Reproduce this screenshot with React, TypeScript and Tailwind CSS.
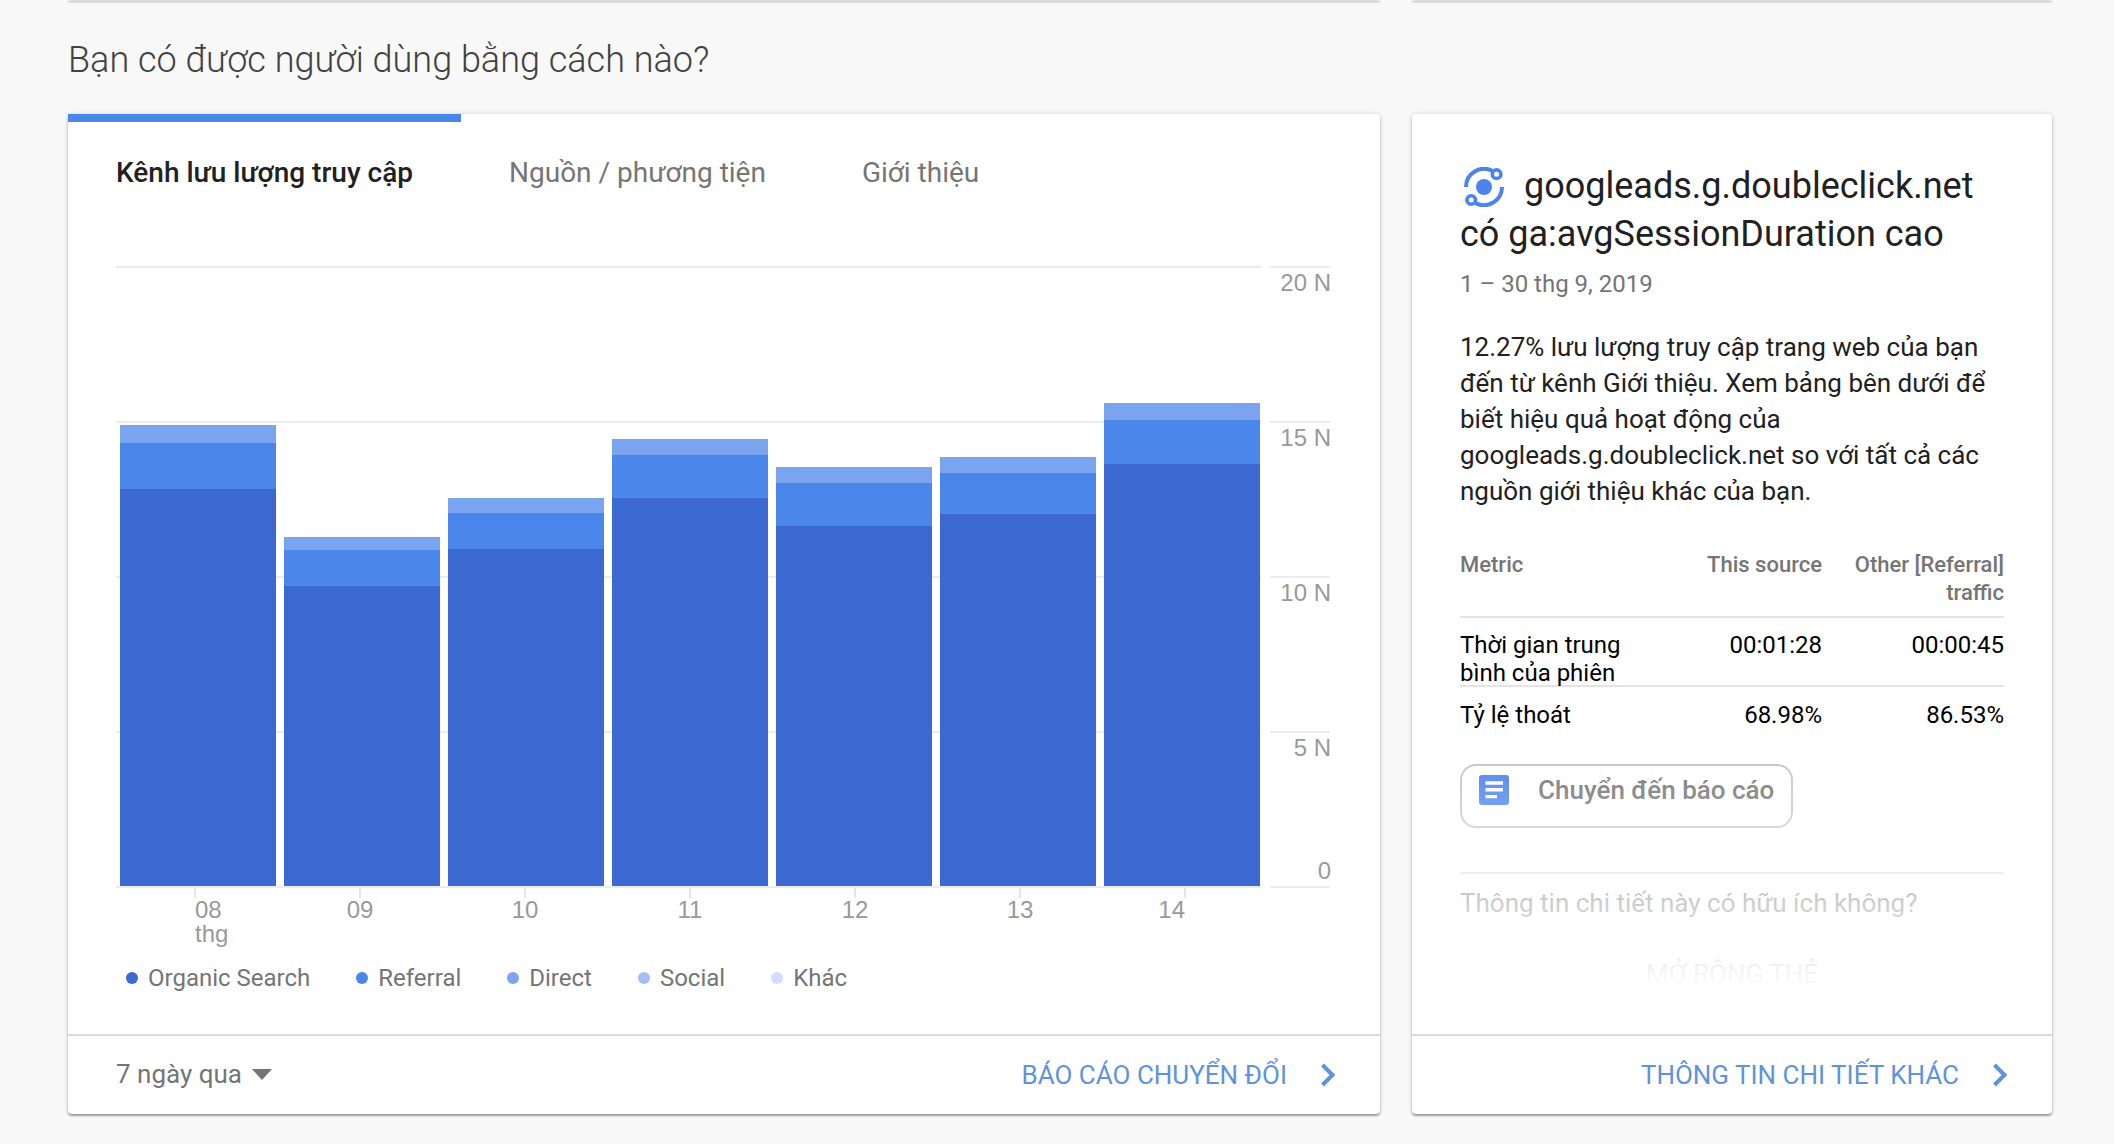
import { useState } from "react";

const tabs = ["Kênh lưu lượng truy cập", "Nguồn / phương tiện", "Giới thiệu"];

// tops of the stacked segments, measured from the top grid line
const bars = [
  { day: "08", direct: 159, referral: 177, organic: 223 },
  { day: "09", direct: 271, referral: 284, organic: 320 },
  { day: "10", direct: 232, referral: 247, organic: 283 },
  { day: "11", direct: 173, referral: 189, organic: 232 },
  { day: "12", direct: 201, referral: 217, organic: 260 },
  { day: "13", direct: 191, referral: 207, organic: 248 },
  { day: "14", direct: 137, referral: 154, organic: 198 },
];

const gridLines = [
  { y: 1, label: "20 N", labelY: 25 },
  { y: 156, label: "15 N", labelY: 180 },
  { y: 311, label: "10 N", labelY: 335 },
  { y: 466, label: "5 N", labelY: 490 },
  { y: 621, label: "0", labelY: 613 },
];

const legend = [
  { name: "Organic Search", dot: "bg-[#3b68d1]" },
  { name: "Referral", dot: "bg-[#4b86ea]" },
  { name: "Direct", dot: "bg-[#7ba4f2]" },
  { name: "Social", dot: "bg-[#a3bff5]" },
  { name: "Khác", dot: "bg-[#d0dcfa]" },
];

const metrics = [
  { name: "Thời gian trung bình của phiên", source: "00:01:28", other: "00:00:45" },
  { name: "Tỷ lệ thoát", source: "68.98%", other: "86.53%" },
];

const cardStyle =
  "flex flex-col rounded-sm bg-white shadow-[0_0_4px_rgba(0,0,0,0.16),0_2px_2px_rgba(0,0,0,0.32)]";

function Chevron() {
  return (
    <svg viewBox="0 0 16 24" className="h-6 w-4" fill="none" stroke="#5f93dc" strokeWidth="4">
      <path d="M2.5 2 L12.5 12 L2.5 22" />
    </svg>
  );
}

function OrbitIcon() {
  return (
    <svg
      viewBox="0 0 40 40"
      className="mr-5 ml-1 inline-block size-10 align-[-9px]"
      fill="none"
      stroke="#4a84ec"
      strokeWidth="4"
    >
      <circle cx="20" cy="20" r="8" fill="#4a84ec" stroke="none" />
      <path d="M2 20 A18 18 0 0 1 28.5 4" />
      <path d="M38 20 A18 18 0 0 1 11.5 36" />
      <circle cx="32.6" cy="7.2" r="4.3" strokeWidth="3.6" />
      <circle cx="7.2" cy="33" r="4.3" strokeWidth="3.6" />
    </svg>
  );
}

function ReportIcon() {
  return (
    <svg viewBox="0 0 30 30" className="size-[30px]">
      <rect width="30" height="30" rx="3" fill="#4a84ec" />
      <path d="M6.5 8 H24 M6.5 14.8 H24 M6.5 21.6 H18" stroke="#fff" strokeWidth="3.4" />
    </svg>
  );
}

function ChannelChart() {
  return (
    <svg
      viewBox="0 0 1216 684"
      className="h-auto w-full font-['Liberation_Sans',Arial,sans-serif] text-[24px]"
      role="img"
    >
      {gridLines.map((line) => (
        <g key={line.label}>
          <path d={`M0 ${line.y} H1145 M1154 ${line.y} H1214`} stroke="#ebebeb" strokeWidth="2" />
          <text x="1215" y={line.labelY} textAnchor="end" fill="#999">
            {line.label}
          </text>
        </g>
      ))}
      {bars.map((bar, i) => {
        const x = 4 + i * 164;
        const tick = 79 + i * 165;
        const anchor = i === 0 ? "start" : i === bars.length - 1 ? "end" : "middle";
        return (
          <g key={bar.day}>
            <rect x={x} y={bar.direct} width="156" height={620 - bar.direct} fill="#7aa4f0" />
            <rect x={x} y={bar.referral} width="156" height={620 - bar.referral} fill="#4b86ea" />
            <rect x={x} y={bar.organic} width="156" height={620 - bar.organic} fill="#3b68d1" />
            <path d={`M${tick} 622 V632`} stroke="#e4e6ee" strokeWidth="2" />
            <text x={tick} y="652" textAnchor={anchor} fill="#999">
              {bar.day}
            </text>
          </g>
        );
      })}
      <text x="79" y="676" fill="#999">
        thg
      </text>
    </svg>
  );
}

function TrafficCard() {
  const [active, setActive] = useState(0);

  return (
    <section className={`${cardStyle} min-w-0 flex-1`}>
      <div className="flex">
        {tabs.map((tab, i) => (
          <button
            key={tab}
            type="button"
            onClick={() => setActive(i)}
            className={`border-t-8 px-12 pt-[33px] text-[28px] leading-9 whitespace-nowrap ${
              i === active
                ? "border-[#4b86ea] font-medium text-[#212121]"
                : "border-transparent text-[#757575]"
            }`}
          >
            {tab}
          </button>
        ))}
      </div>
      <div className="px-12 pt-[75px] pb-10">
        <ChannelChart />
        <ul className="mt-3 ml-[10px] flex gap-[46px] text-[24px] leading-8 text-[#757575]">
          {legend.map((item) => (
            <li key={item.name} className="flex items-center gap-[10px]">
              <span className={`size-3 rounded-full ${item.dot}`} />
              {item.name}
            </li>
          ))}
        </ul>
      </div>
      <footer className="mt-auto flex h-20 items-center justify-between border-t-2 border-[#dcdcdc] pr-11 pl-12 text-[26px]">
        <div className="flex items-center gap-[10px] pb-[2px] text-[#757575]">
          <select aria-label="Khoảng thời gian" className="appearance-none leading-9">
            <option>7 ngày qua</option>
          </select>
          <svg viewBox="0 0 20 11" className="h-[11px] w-5" fill="#757575">
            <path d="M0 0 H20 L10 11 Z" />
          </svg>
        </div>
        <a href="#conversions" className="flex items-center gap-[33px] text-[#5f93dc]">
          BÁO CÁO CHUYỂN ĐỔI
          <Chevron />
        </a>
      </footer>
    </section>
  );
}

function InsightCard() {
  return (
    <section className={`${cardStyle} w-[640px] shrink-0`}>
      <div className="relative flex-1 px-12 pt-12 pb-10 text-[#212121]">
        <h2 className="text-[36px] leading-[48px]">
          <OrbitIcon />
          googleads.g.doubleclick.net có ga:avgSessionDuration cao
        </h2>
        <p className="mt-2 text-[24px] leading-9 text-[#757575]">1 – 30 thg 9, 2019</p>
        <p className="mt-[27px] text-[26px] leading-9">
          12.27% lưu lượng truy cập trang web của bạn đến từ kênh Giới thiệu. Xem bảng bên dưới để
          biết hiệu quả hoạt động của googleads.g.doubleclick.net so với tất cả các nguồn giới thiệu
          khác của bạn.
        </p>

        <table className="mt-[42px] w-full table-fixed border-separate border-spacing-0 text-[24px] leading-7 text-black">
          <thead>
            <tr className="align-top text-[22px] text-[#757575] [&>th]:border-b-2 [&>th]:border-[#e4e4e4] [&>th]:pb-[9px] [&>th]:font-medium">
              <th className="w-[180px] text-left">Metric</th>
              <th className="text-right">This source</th>
              <th className="text-right">
                Other [Referral]
                <br />
                traffic
              </th>
            </tr>
          </thead>
          <tbody>
            {metrics.map((metric, i) => (
              <tr
                key={metric.name}
                className={`align-top ${
                  i === 0
                    ? "[&>td]:border-b-2 [&>td]:border-[#e4e4e4] [&>td]:pt-[13px]"
                    : "[&>td]:pt-[14px]"
                }`}
              >
                <td>
                  <div className={i === 0 ? "h-[54px]" : ""}>{metric.name}</div>
                </td>
                <td className="text-right">{metric.source}</td>
                <td className="text-right">{metric.other}</td>
              </tr>
            ))}
          </tbody>
        </table>

        <button
          type="button"
          className="mt-[35px] flex items-center gap-[29px] rounded-2xl border-2 border-[#c6c6c6] pt-1.5 pr-[17px] pb-[18px] pl-[17px] text-[26px] leading-9 font-medium text-[#757575]"
        >
          <ReportIcon />
          Chuyển đến báo cáo
        </button>

        <p className="mt-11 border-t-2 border-[#dedede] pt-[11px] text-[26px] leading-9 text-[#757575]">
          Thông tin chi tiết này có hữu ích không?
        </p>
        <button type="button" className="mt-[35px] block w-full text-[26px] leading-9 text-[#757575]">
          MỞ RỘNG THẺ
        </button>
        <div className="pointer-events-none absolute inset-x-0 bottom-11 h-60 bg-linear-to-b from-white/0 to-white" />
      </div>
      <footer className="flex h-20 items-center justify-end border-t-2 border-[#dcdcdc] pr-11 text-[26px]">
        <a href="#insights" className="flex items-center gap-[33px] text-[#5f93dc]">
          THÔNG TIN CHI TIẾT KHÁC
          <Chevron />
        </a>
      </footer>
    </section>
  );
}

export default function App() {
  return (
    <div className="flex min-h-screen flex-col bg-[#f8f8f8] pr-[62px] pb-[30px] pl-[68px] font-[Roboto,sans-serif]">
      <div className="-mt-px flex gap-8">
        <div className={`${cardStyle} h-px flex-1`} />
        <div className={`${cardStyle} h-px w-[640px]`} />
      </div>
      <h1 className="mt-9 mb-[30px] text-[36px] leading-[48px] font-light text-[#424242]">
        Bạn có được người dùng bằng cách nào?
      </h1>
      <main className="flex gap-8">
        <TrafficCard />
        <InsightCard />
      </main>
    </div>
  );
}
